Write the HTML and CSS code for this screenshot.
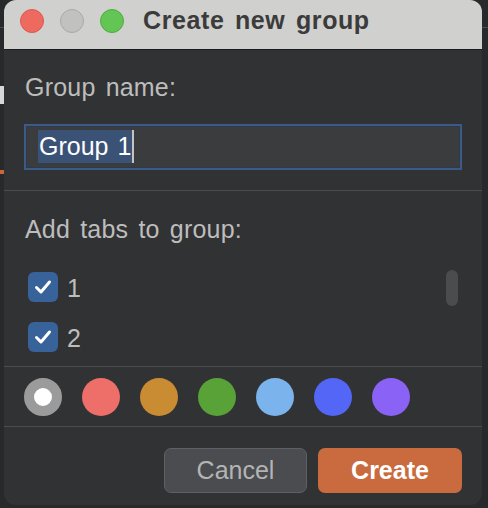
FILE: index.html
```html
<!DOCTYPE html>
<html>
<head>
<meta charset="utf-8">
<link rel="stylesheet" href="styles.css">
</head>
<body>
<div class="backdrop">
  <div class="bd-line"></div>
  <div class="bd-white"></div>
  <div class="bd-orange"></div>
</div>
<div class="window">
  <div class="titlebar">
    <span class="light red"></span>
    <span class="light gray"></span>
    <span class="light green"></span>
    <span class="title">Create new group</span>
  </div>
  <div class="section name">
    <div class="label">Group name:</div>
    <div class="input"><span class="sel">Group 1</span><span class="caret"></span></div>
  </div>
  <div class="sep"></div>
  <div class="section tabs">
    <div class="label">Add tabs to group:</div>
    <div class="list">
      <div class="row"><span class="check"><svg viewBox="0 0 30 30" width="30" height="30"><path d="M8.5 15.5 L13 20 L21.5 10" fill="none" stroke="#fff" stroke-width="3" stroke-linecap="round" stroke-linejoin="round"/></svg></span><span class="rlabel">1</span></div>
      <div class="row"><span class="check"><svg viewBox="0 0 30 30" width="30" height="30"><path d="M8.5 15.5 L13 20 L21.5 10" fill="none" stroke="#fff" stroke-width="3" stroke-linecap="round" stroke-linejoin="round"/></svg></span><span class="rlabel">2</span></div>
      <div class="thumb"></div>
    </div>
  </div>
  <div class="sep"></div>
  <div class="colors">
    <span class="dot none"></span>
    <span class="dot c-red"></span>
    <span class="dot c-orange"></span>
    <span class="dot c-green"></span>
    <span class="dot c-sky"></span>
    <span class="dot c-blue"></span>
    <span class="dot c-purple"></span>
  </div>
  <div class="sep"></div>
  <div class="actions">
    <button class="btn cancel">Cancel</button>
    <button class="btn create">Create</button>
  </div>
</div>
</body>
</html>
```

FILE: styles.css
```css
html, body {
  margin: 0;
  padding: 0;
}
body {
  background: #28292b;
  width: 488px;
  height: 508px;
  overflow: hidden;
  font-family: "Liberation Sans", Arial, sans-serif;
  position: relative;
}
.backdrop {
  position: absolute;
  inset: 0;
}
.bd-line {
  position: absolute;
  left: 0;
  right: 0;
  top: 27px;
  height: 1px;
  background: #4a4b4d;
}
.bd-white {
  position: absolute;
  left: 0;
  top: 86px;
  width: 4px;
  height: 18px;
  background: #d8d8d8;
}
.bd-orange {
  position: absolute;
  left: 0;
  top: 170px;
  width: 4px;
  height: 4px;
  background: #c8683a;
}
.window {
  position: relative;
  margin-left: 4px;
  width: 478px;
  height: 505px;
  background: #313234;
  border-radius: 12px;
  overflow: hidden;
  display: flex;
  flex-direction: column;
}
.titlebar {
  border-bottom: 1px solid #1c1c1d;
  background: #d0d0ce;
  display: flex;
  align-items: flex-start;
  padding-left: 16px;
  padding-top: 9px;
  box-sizing: content-box;
  height: 40px;
}
.light {
  width: 24px;
  height: 24px;
  box-sizing: border-box;
  border-radius: 50%;
  margin-right: 16px;
  flex: none;
}
.red { background: #ee6a5f; border: 1px solid #d7594f; }
.gray { background: #c1c1bf; border: 1px solid #a9a9a7; }
.green { background: #62c554; border: 1px solid #4fab42; }
.title {
  margin-left: 3px;
  margin-top: -3px;
  font-size: 25px;
  line-height: 29px;
  font-weight: bold;
  letter-spacing: 0.6px;
  word-spacing: 3px;
  color: #3b3b3b;
}
.section {
  padding-left: 21px;
  padding-right: 20px;
}
.label {
  font-size: 25px;
  line-height: 29px;
  letter-spacing: 0.2px;
  word-spacing: 3px;
  color: #bdbdbd;
}
.name {
  padding-top: 23px;
  padding-bottom: 20px;
}
.input {
  margin-top: 22px;
  margin-left: -1px;
  height: 46px;
  box-sizing: border-box;
  border: 2px solid #3b5b86;
  box-shadow: inset 0 0 0 1px #2d3a4c;
  background: #3b3c3e;
  padding: 4px 0 0 12px;
  display: flex;
  align-items: flex-start;
}
.sel {
  background: #3a5276;
  color: #ffffff;
  font-size: 25px;
  line-height: 33px;
  height: 33px;
  padding: 0 1px;
  word-spacing: 2px;
}
.caret {
  width: 2px;
  height: 33px;
  background: #c4c4c4;
}
.sep {
  height: 1px;
  background: #4b4c4e;
  flex: none;
}
.tabs {
  padding-top: 24px;
  padding-bottom: 14px;
}
.list {
  position: relative;
  margin-top: 28px;
  display: flex;
  flex-direction: column;
  gap: 20px;
}
.row {
  display: flex;
  align-items: center;
  height: 30px;
  margin-left: 3px;
}
.check {
  width: 30px;
  height: 30px;
  border-radius: 6px;
  background: #37629a;
  display: flex;
  flex: none;
}
.rlabel {
  margin-left: 9px;
  font-size: 25px;
  line-height: 29px;
  color: #bdbdbd;
  position: relative;
  top: 1px;
}
.thumb {
  position: absolute;
  right: 4px;
  top: -2px;
  width: 12px;
  height: 36px;
  border-radius: 6px;
  background: #4b4c4e;
}
.colors {
  padding: 11px 20px 10px 20px;
  display: flex;
  gap: 20px;
}
.dot {
  width: 38px;
  height: 38px;
  border-radius: 50%;
  box-sizing: border-box;
  flex: none;
}
.none { background: #ffffff; border: 10px solid #9b9b9c; }
.c-red { background: #ee6e6a; }
.c-orange { background: #c98c33; }
.c-green { background: #59a238; }
.c-sky { background: #7bb4ec; }
.c-blue { background: #5366f5; }
.c-purple { background: #8a62f5; }
.actions {
  padding: 21px 20px 12px 0;
  display: flex;
  justify-content: flex-end;
  gap: 11px;
}
.btn {
  height: 45px;
  border-radius: 7px;
  font-family: "Liberation Sans", Arial, sans-serif;
  font-size: 25px;
  padding: 0;
  box-sizing: border-box;
}
.cancel {
  width: 143px;
  background: #4a4c4f;
  border: 1px solid #5e6063;
  color: #b4b4b4;
}
.create {
  width: 144px;
  background: #c96b3e;
  border: none;
  color: #ffffff;
  font-weight: bold;
}
```
